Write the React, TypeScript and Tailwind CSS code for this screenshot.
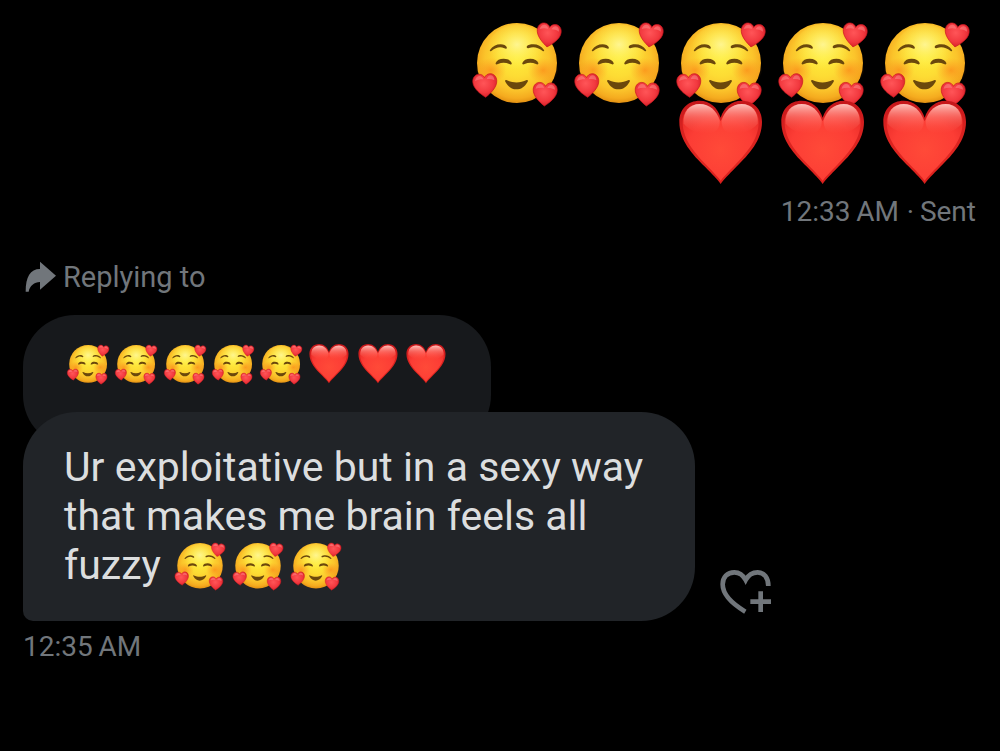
import React from 'react';

type EmojiKind = 'face' | 'heart';

function EmojiPaints() {
  return (
    <svg className="absolute h-0 w-0" aria-hidden="true">
      <defs>
        <radialGradient id="skin" cx="0.5" cy="0.44" r="0.57">
          <stop offset="0" stopColor="#ffec3a" />
          <stop offset="0.4" stopColor="#fddc34" />
          <stop offset="0.7" stopColor="#fbc42b" />
          <stop offset="0.88" stopColor="#f5ab1f" />
          <stop offset="1" stopColor="#e08c10" />
        </radialGradient>
        <radialGradient id="shine" cx="0.5" cy="0.4" r="0.5">
          <stop offset="0" stopColor="#fff9a0" stopOpacity="0.85" />
          <stop offset="0.5" stopColor="#fff56a" stopOpacity="0.5" />
          <stop offset="1" stopColor="#fff04f" stopOpacity="0" />
        </radialGradient>
        <radialGradient id="blush">
          <stop offset="0" stopColor="#fb7d14" stopOpacity="0.6" />
          <stop offset="1" stopColor="#fb8d1c" stopOpacity="0" />
        </radialGradient>
        <radialGradient id="smallHeart" cx="0.45" cy="0.4" r="0.65">
          <stop offset="0" stopColor="#ff5558" />
          <stop offset="0.6" stopColor="#f2393f" />
          <stop offset="1" stopColor="#d21c26" />
        </radialGradient>
        <linearGradient id="bigHeart" x1="0" y1="0" x2="0" y2="1">
          <stop offset="0" stopColor="#c4161a" />
          <stop offset="0.3" stopColor="#d6201f" />
          <stop offset="0.7" stopColor="#e02620" />
          <stop offset="1" stopColor="#d81f1c" />
        </linearGradient>
        <radialGradient id="heartCore" cx="0.5" cy="0.6" r="0.6">
          <stop offset="0" stopColor="#ff4a38" />
          <stop offset="0.7" stopColor="#fc3d35" />
          <stop offset="1" stopColor="#ee302b" />
        </radialGradient>
        <linearGradient id="gloss" x1="0" y1="0" x2="0" y2="1">
          <stop offset="0" stopColor="#ffd2cc" stopOpacity="0.9" />
          <stop offset="0.45" stopColor="#ff8f86" stopOpacity="0.5" />
          <stop offset="1" stopColor="#ff5a4a" stopOpacity="0" />
        </linearGradient>
      </defs>
    </svg>
  );
}

function LittleHeart({ place }: { place: string }) {
  return (
    <g transform={place}>
      <path
        d="M0 36C-14 26-36 8-36-12C-36-26-27-34-17-34C-9-34-3-30 0-23C3-30 9-34 17-34C27-34 36-26 36-12C36 8 14 26 0 36Z"
        fill="url(#smallHeart)"
        stroke="#c9161f"
        strokeWidth="2"
      />
      <path d="M-29-14C-28-24-22-29-16-29C-10-29-6-25-4-18C-12-19-21-18-29-14Z" fill="#ff9a98" opacity="0.45" />
      <path d="M6-18C9-26 13-29 18-29C24-29 29-24 29-14C21-18 14-19 6-18Z" fill="#ff9a98" opacity="0.45" />
    </g>
  );
}

function Emoji({ kind }: { kind: EmojiKind }) {
  if (kind === 'heart') {
    return (
      <svg viewBox="-1 39 306 240" className="block w-full overflow-visible" role="img" aria-label="red heart">
        <path
          d="M151 282C142 268 128 255 104 230C66 193 27 151 27 95C27 57 53 32 88 32C119 32 141 52 151 83C161 52 183 32 214 32C249 32 275 57 275 95C275 151 236 193 198 230C174 255 160 268 151 282Z"
          fill="url(#bigHeart)"
        />
        <path
          d="M151 272C142 260 130 248 108 225C74 190 37 149 37 97C37 63 59 42 88 42C119 42 139 64 151 94C163 64 183 42 214 42C243 42 265 63 265 97C265 149 228 190 194 225C172 248 160 260 151 272Z"
          fill="url(#heartCore)"
        />
        <path d="M40 101C37 65 58 42 88 42C118 42 139 62 148 92C149 112 140 126 121 130C91 133 61 125 40 101Z" fill="url(#gloss)" />
        <path d="M262 101C265 65 244 42 214 42C184 42 163 62 154 92C153 112 162 126 181 130C211 133 241 125 262 101Z" fill="url(#gloss)" />
      </svg>
    );
  }
  return (
    <svg viewBox="3 38 306 240" className="block w-full overflow-visible" role="img" aria-label="smiling face with hearts">
      <circle cx="156" cy="158" r="120" fill="url(#skin)" />
      <ellipse cx="156" cy="118" rx="88" ry="76" fill="url(#shine)" />
      <ellipse cx="78" cy="180" rx="46" ry="38" fill="url(#blush)" />
      <ellipse cx="234" cy="180" rx="46" ry="38" fill="url(#blush)" />
      <g fill="#6b480c">
        <path d="M75 119C82 108 94 102 107 102C116 102 123 106 125 110C127 115 123 117 118 114C105 107 92 112 80 121C76 124 73 122 75 119Z" />
        <path d="M237 119C230 108 218 102 205 102C196 102 189 104 186 107C183 112 187 115 192 113C206 107 220 112 232 121C236 124 239 122 237 119Z" />
        <path d="M92 158C95 149 104 145 116 145C129 145 137 150 140 158C141 162 137 164 133 161C122 156 110 156 99 161C94 164 91 162 92 158Z" />
        <path d="M172 158C175 149 184 145 196 145C209 145 217 150 220 158C221 162 217 164 213 161C202 156 190 156 179 161C174 164 171 162 172 158Z" />
        <path d="M124 209C143 219 166 219 185 209C188 208 190 211 188 214C179 230 168 237 154 237C141 237 130 230 121 214C119 211 121 208 124 209Z" />
      </g>
      <LittleHeart place="translate(251 74) rotate(8)" />
      <LittleHeart place="translate(60 225) rotate(-3)" />
      <LittleHeart place="translate(240 251) rotate(3)" />
    </svg>
  );
}

const sentRows: EmojiKind[][] = [
  ['face', 'face', 'face', 'face', 'face'],
  ['heart', 'heart', 'heart'],
];

function ReplyArrow() {
  return (
    <svg viewBox="75 60 96 96" className="h-8 w-8" fill="#71767b" aria-hidden="true">
      <path d="M120 62L168 104L120 146V123C103 124 89 134 86 152H77C77 107 91 84 120 84Z" />
    </svg>
  );
}

function HeartPlus() {
  return (
    <svg viewBox="57 54 159 138" className="block w-[53px]" aria-hidden="true">
      <path
        d="M136 182C99 160 68 134 68 100C68 79 82 64 103 64C118 64 129 72 137 87C145 72 158 64 173 64C192 64 205 80 205 105"
        fill="none"
        stroke="#71767b"
        strokeWidth="14"
      />
      <path d="M175 121H189V145H213V159H189V183H175V159H151V145H175Z" fill="#71767b" />
    </svg>
  );
}

export default function App() {
  const quoted = sentRows.flat();
  return (
    <main className="min-h-screen bg-black pb-8 pl-[23px] pr-6 pt-[23px] font-['Roboto','Liberation_Sans',sans-serif] text-[28px] leading-9 text-[#71767b]">
      <EmojiPaints />
      <section className="flex flex-col items-end">
        {sentRows.map((row, r) => (
          <div key={r} className="flex">
            {row.map((kind, i) => (
              <span key={i} className="w-[102px]">
                <Emoji kind={kind} />
              </span>
            ))}
          </div>
        ))}
        <p className="mt-[11px] flex gap-2">
          <time>12:33{'\u2009'}AM</time>
          <span>·{'\u2009'}Sent</span>
        </p>
      </section>

      <section className="mt-[29px] flex flex-col items-start">
        <div className="flex items-center gap-1.5 pl-0.5">
          <ReplyArrow />
          <span className="text-[29px]">Replying to</span>
        </div>
        <blockquote className="mt-5 rounded-[52px] bg-[#17191c] px-[41px] pb-16 pt-[30px]">
          <div className="grid w-[386px] grid-cols-8">
            {quoted.map((kind, i) => (
              <Emoji key={i} kind={kind} />
            ))}
          </div>
        </blockquote>
        <div className="-mt-[35px] flex items-end gap-6">
          <p className="z-10 w-[672px] rounded-[54px] rounded-bl-[10px] bg-[#212428] px-[41px] py-[31px] text-[41px] leading-[49px] text-[#dcdedf]">
            Ur exploitative but in a sexy way that makes me brain feels all fuzzy{' '}
            <span className="inline-flex align-[-10px]">
              {[0, 1, 2].map((i) => (
                <span key={i} className="w-[58px]">
                  <Emoji kind="face" />
                </span>
              ))}
            </span>
          </p>
          <button type="button" aria-label="Add reaction" className="mb-1.5">
            <HeartPlus />
          </button>
        </div>
        <time className="mt-2">12:35{'\u2009'}AM</time>
      </section>
    </main>
  );
}
